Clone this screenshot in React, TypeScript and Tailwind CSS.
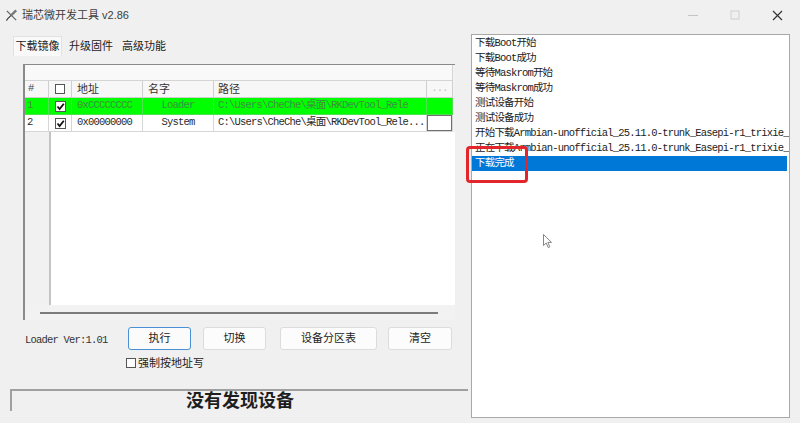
import { Fragment } from 'react';

const sans = "font-['Liberation_Sans','Noto_Sans_CJK_SC',sans-serif]";
const mono = "font-['Liberation_Mono','Noto_Sans_CJK_SC',monospace] text-[10.5px] tracking-[-0.8px]";

const logLines = [
  '下载Boot开始',
  '下载Boot成功',
  '等待Maskrom开始',
  '等待Maskrom成功',
  '测试设备开始',
  '测试设备成功',
  '开始下载Armbian-unofficial_25.11.0-trunk_Easepi-r1_trixie_e',
  '正在下载Armbian-unofficial_25.11.0-trunk_Easepi-r1_trixie_',
];

function Check({ checked, size = 'w-[11px] h-[11px]' }: { checked?: boolean; size?: string }) {
  return (
    <span className={`${size} border border-[#555] bg-white flex items-center justify-center shrink-0`}>
      {checked && (
        <svg width="9" height="9" viewBox="0 0 9 9">
          <path d="M1.5 4.5 L3.6 7 L7.8 1.8" fill="none" stroke="#111" strokeWidth="1.8" />
        </svg>
      )}
    </span>
  );
}

function TitleBar() {
  return (
    <div className="h-[30px] flex items-center shrink-0">
      <svg className="ml-[5px]" width="13" height="13" viewBox="0 0 14 14">
        <path d="M2 2 L12 12" stroke="#666" strokeWidth="1.4" />
        <path d="M12 1.5 L6.5 7" stroke="#777" strokeWidth="2.6" />
        <path d="M6.5 7 Q3 10 1.5 12.5" fill="none" stroke="#444" strokeWidth="1.2" />
      </svg>
      <span className={`${sans} ml-[4px] text-[11px] text-[#3c3c3c]`}>瑞芯微开发工具 v2.86</span>
      <div className="flex-1" />
      <div className="flex mr-[2px]">
        <div className="w-[42px] h-[30px] flex items-center justify-center">
          <svg width="10" height="10" viewBox="0 0 10 10">
            <path d="M0 5.5 H10" stroke="#c4c4c4" strokeWidth="1" />
          </svg>
        </div>
        <div className="w-[42px] h-[30px] flex items-center justify-center">
          <svg width="10" height="10" viewBox="0 0 10 10">
            <rect x="1" y="1" width="8" height="8" fill="none" stroke="#cfcfcf" strokeWidth="1" />
          </svg>
        </div>
        <div className="w-[42px] h-[30px] flex items-center justify-center">
          <svg width="11" height="11" viewBox="0 0 11 11">
            <path d="M1 1 L10 10 M10 1 L1 10" stroke="#333" strokeWidth="1.2" />
          </svg>
        </div>
      </div>
    </div>
  );
}

type Row = { no: string; addr: string; name: string; path: string; active?: boolean };

const rows: Row[] = [
  { no: '1', addr: '0xCCCCCCCC', name: 'Loader', path: 'C:\\Users\\CheChe\\桌面\\RKDevTool_Rele', active: true },
  { no: '2', addr: '0x00000000', name: 'System', path: 'C:\\Users\\CheChe\\桌面\\RKDevTool_Rele...' },
];

function ImageTable() {
  const head = 'h-[17px] border-r border-b border-[#cfcfcf] bg-[#f7f7f7] flex items-center';
  return (
    <div className="ml-[23px] mt-[8px] w-[432px] h-[256px] border-l-2 border-t border-[#8a8a8a] flex flex-col bg-[#f2f2f2]">
      <div className="h-[16px] w-[428px] bg-[#f9f9f9] border-b border-r border-[#d4d4d4] shrink-0" />
      <div className="grid grid-cols-[24px_23px_71px_71px_213px_26px] shrink-0">
        <div className={`${head} pl-[3px] ${mono} text-[#444]`}>#</div>
        <div className={`${head} justify-center`}>
          <Check size="w-[10px] h-[10px]" />
        </div>
        <div className={`${head} pl-[5px] ${sans} text-[11px] text-[#333]`}>地址</div>
        <div className={`${head} pl-[5px] ${sans} text-[11px] text-[#333]`}>名字</div>
        <div className={`${head} pl-[4px] ${sans} text-[11px] text-[#333]`}>路径</div>
        <div className={`${head} justify-center ${mono} text-[#c0c0c0]`}>...</div>
        {rows.map((r) => {
          const cell = r.active
            ? 'h-[17px] bg-[#00ff00] border-r border-b border-[#4fe04f] text-[#3f8f3f] flex items-center overflow-hidden whitespace-nowrap'
            : 'h-[17px] bg-white border-r border-b border-[#d6d6d6] text-[#2a2a2a] flex items-center overflow-hidden whitespace-nowrap';
          return (
            <Fragment key={r.no}>
              <div className={`${cell} ${mono} pl-[2px]`}>{r.no}</div>
              <div className={`${cell} justify-center`}>
                <Check checked />
              </div>
              <div className={`${cell} ${mono} pl-[5px]`}>{r.addr}</div>
              <div className={`${cell} ${mono} justify-center`}>{r.name}</div>
              <div className={`${cell} ${mono} pl-[4px]`}>{r.path}</div>
              <div className={cell}>
                {!r.active && <div className="w-full h-full border border-[#707070] bg-white" />}
              </div>
            </Fragment>
          );
        })}
      </div>
      <div className="h-[173px] flex shrink-0">
        <div className="w-[24px] bg-[#f1f1f1]" />
        <div className="flex-1 bg-white border-l-2 border-[#c4c4c4]" />
      </div>
      <div className="flex-1 flex items-center">
        <div className="ml-[15px] w-[398px] h-[2px] bg-[#7c7c7c]" />
      </div>
    </div>
  );
}

function Btn({ label, focused, className }: { label: string; focused?: boolean; className: string }) {
  return (
    <button
      className={`${className} h-[23px] rounded-[3px] ${sans} text-[11px] text-[#222] flex items-center justify-center ${
        focused ? 'bg-[#fbfbfb] border border-[#4a90d6]' : 'bg-[#fcfcfc] border border-[#dcdcdc]'
      }`}
    >
      {label}
    </button>
  );
}

function LeftPanel() {
  return (
    <div className="w-[470px] flex flex-col shrink-0">
      <div className={`flex mt-[6px] h-[20px] ml-[13px] ${sans} text-[11px] text-[#222]`}>
        <div className="w-[49px] bg-[#f9f9f9] border border-[#e2e2e2] border-b-0 flex items-center justify-center">下载镜像</div>
        <div className="ml-[4px] w-[50px] flex items-center justify-center">升级固件</div>
        <div className="ml-[3px] w-[50px] flex items-center justify-center">高级功能</div>
      </div>
      <ImageTable />
      <div className="flex items-center mt-[7px] h-[23px]">
        <span className={`ml-[25px] w-[103px] pt-[5px] ${mono} text-[#333]`}>Loader Ver:1.01</span>
        <Btn label="执行" focused className="w-[63px]" />
        <Btn label="切换" className="ml-[12px] w-[63px]" />
        <Btn label="设备分区表" className="ml-[14px] w-[97px]" />
        <Btn label="清空" className="ml-[11px] w-[64px]" />
      </div>
      <div className={`flex items-center mt-[6px] h-[14px] ml-[126px] ${sans} text-[11px] text-[#222]`}>
        <Check size="w-[10px] h-[10px]" />
        <span className="ml-[2px]">强制按地址写</span>
      </div>
      <div className="ml-[10px] mt-[19px] w-[458px] h-[22px] border-t-2 border-l-2 border-t-[#a0a0a0] border-l-[#a0a0a0] flex items-center justify-center">
        <span className={`${sans} text-[18px] font-bold leading-none text-[#1e1e1e]`}>没有发现设备</span>
      </div>
    </div>
  );
}

function LogPanel() {
  return (
    <div className="ml-[1px] mt-[4px] w-[319px] h-[384px] border border-[#a8a8a8] bg-white pt-[1px] overflow-hidden">
      {logLines.map((line, i) => (
        <div key={i} className={`h-[15px] leading-[15px] pl-[3px] whitespace-nowrap overflow-hidden ${mono} text-[#222]`}>
          {line}
        </div>
      ))}
      <div className={`h-[15px] leading-[15px] pl-[3px] mr-[2px] bg-[#0078d7] text-white ${mono}`}>下载完成</div>
    </div>
  );
}

export default function App() {
  return (
    <div className="relative w-[800px] h-[423px] overflow-hidden bg-[#f0f0f0] flex flex-col">
      <TitleBar />
      <div className="flex flex-1 min-h-0">
        <LeftPanel />
        <LogPanel />
      </div>

      {/* annotation around the last log line */}
      <div className="absolute left-[466px] top-[146px] w-[62px] h-[37px] border-[3px] border-[#e3262b] rounded-[4px]" />

      {/* mouse pointer */}
      <svg className="absolute left-[543px] top-[234px]" width="10" height="15" viewBox="0 0 10 15">
        <path d="M0.5 0.5 L0.5 11.5 L3.2 9 L5.2 13.5 L6.8 12.8 L4.9 8.4 L8.5 8.4 Z" fill="#fff" stroke="#777" strokeWidth="0.9" />
      </svg>
    </div>
  );
}
